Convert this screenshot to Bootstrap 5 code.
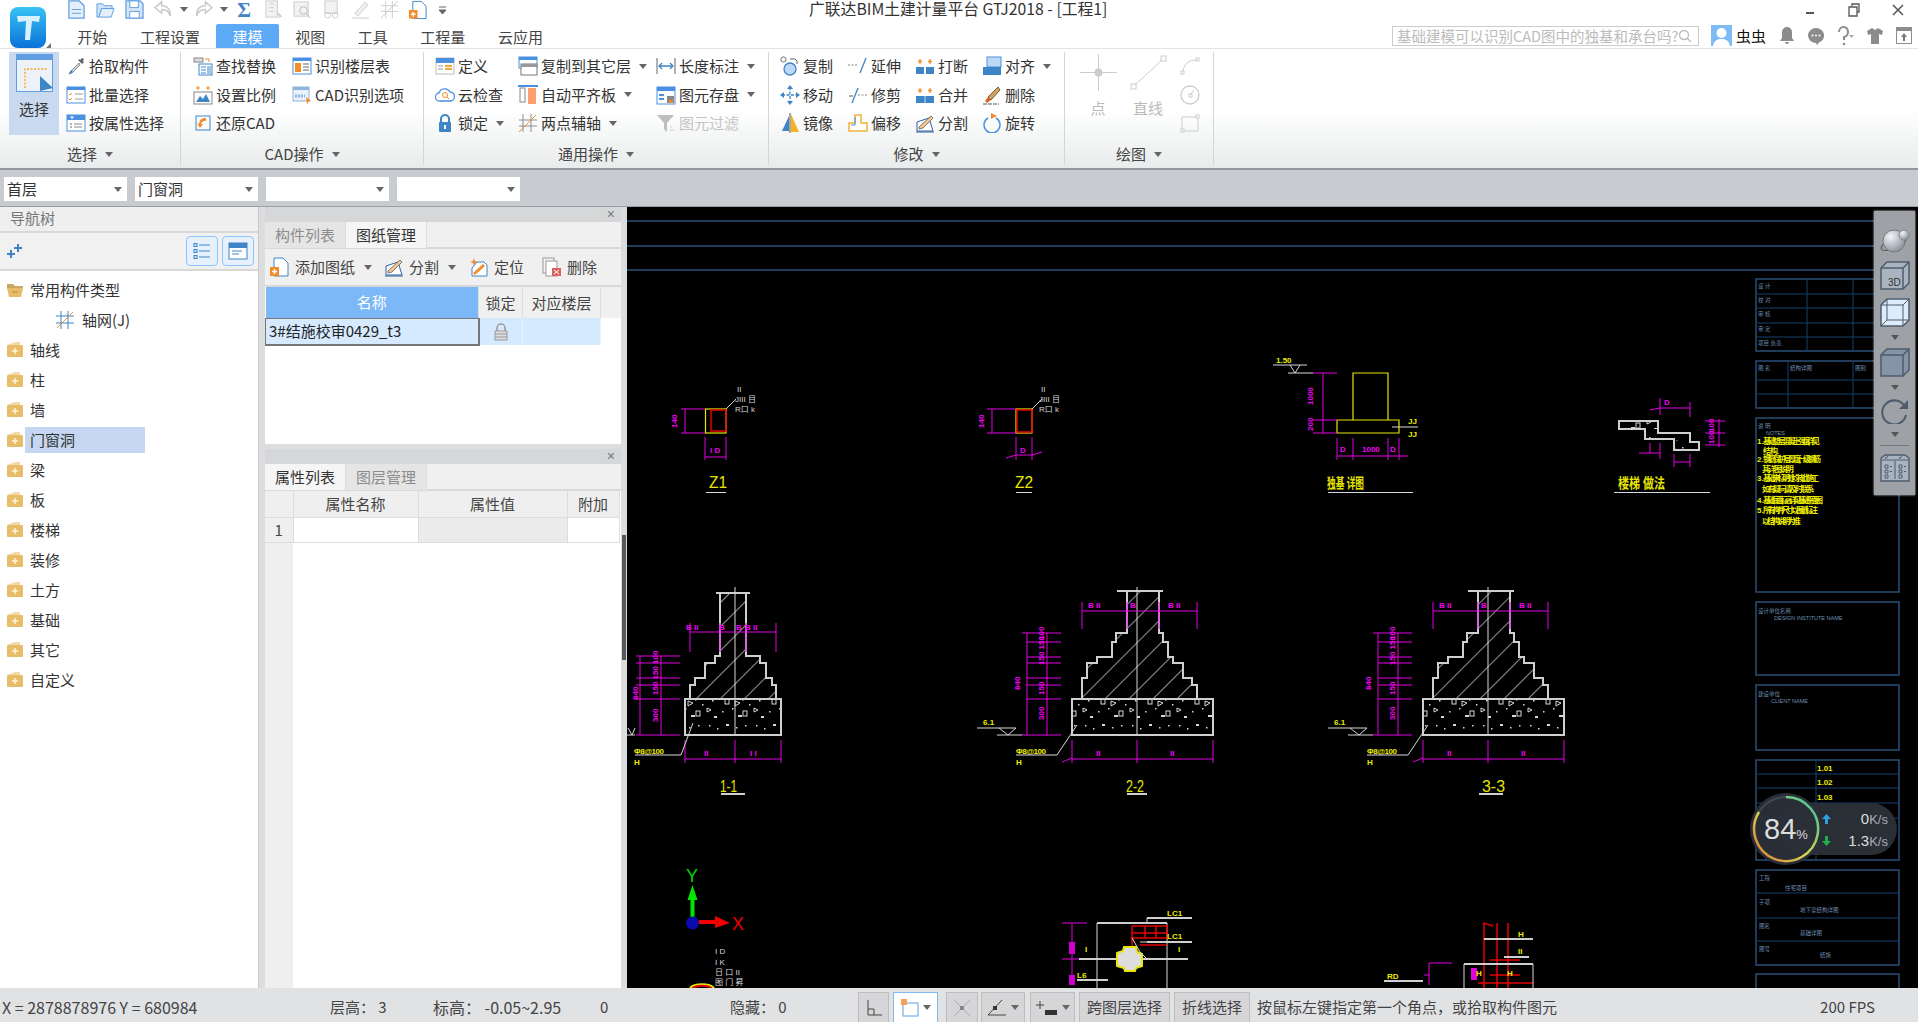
<!DOCTYPE html>
<html lang="zh-CN">
<head>
  <meta charset="UTF-8">
  <meta name="viewport" content="width=device-width, initial-scale=1.0">
  <title>广联达BIM土建计量平台 GTJ2018 - [工程1]</title>
  <link href="https://cdn.jsdelivr.net/npm/bootstrap@5.3.0/dist/css/bootstrap.min.css" rel="stylesheet">
  <style>
    html, body { height: 100%; }
    body {
      display: flex; flex-direction: column; overflow: hidden; background: #fff; color: #333;
      font: 15px/1.2 "Noto Sans CJK SC", "Liberation Sans", sans-serif;
    }
    svg { display: block; flex: none; }
    .off { position: absolute; width: 0; height: 0; }

    /* title bar and tabs */
    .tophead { height: 48px; flex: none; }
    .logocell { width: 61px; flex: none; padding: 7px 0 0 10px; display: flex; align-items: flex-end; align-self: flex-start; gap: 0; }
    .titlerow { height: 24px; padding-bottom: 5px; }
    .qat { width: 748px; padding-left: 6px; gap: 10px; }
    .qat .tri { margin: 0 -3.5px; }
    .qat .sigma { color: #3d85c6; font: bold 21px/20px "Liberation Serif", serif; width: 20px; text-align: center; }
    .apptitle { font-size: 15.8px; color: #333; }
    .winbtns { gap: 30px; padding-right: 13px; }
    .apptabs .nav-link { color: #444; padding: 3px 16.3px 0; height: 24px; font-size: 15px; line-height: 20px; border-radius: 2px 2px 0 0; }
    .apptabs .nav-link.active { color: #fff; background: #5ca9f5; }
    .searchbox { width: 307px; height: 20px; border: 1px solid #ccc; padding: 0 8px 0 4px; color: #bbb; font-size: 14.5px; line-height: 18px; white-space: nowrap; overflow: hidden; }
    .usertools { padding-right: 6px; gap: 12px; margin-top: -1px; }
    .username { color: #111; margin: 0 1px 0 -8px; }

    /* ribbon */
    .ribbon { height: 122px; flex: none; border-top: 1px solid #e4e4e4; border-bottom: 2px solid #94979b; background: linear-gradient(#fff 50%, #e9ecec); }
    .rgroup { display: flex; flex-direction: column; flex: none; height: 113px; border-right: 1px solid #d3d5d6; margin-top: 3px; }
    .rg1 { width: 181px; } .rg1 .rbody { padding-left: 9px; }
    .rg2 { width: 243px; } .rg2 .rbody { padding-left: 12px; }
    .rg3 { width: 345px; } .rg3 .rbody { padding-left: 11px; }
    .rg4 { width: 296px; } .rg4 .rbody { padding-left: 11px; }
    .rg5 { width: 149px; } .rg5 .rbody { padding-left: 8px; }
    .rbody { display: flex; height: 86px; flex: none; }
    .rfoot { height: 27px; flex: none; padding-top: 7px; display: flex; align-items: flex-start; justify-content: center; gap: 8px; color: #444; line-height: 18px; }
    .rfoot .tri { margin-top: 7px; }
    .bigbtn { width: 50px; height: 83px; flex: none; display: flex; flex-direction: column; align-items: center; gap: 8px; padding-top: 2px; }
    .bigbtn.on { background: #c9d9ef; margin-right: 7px; }
    .bigbtn.off-tool { color: #bbb; padding-top: 2px; }
    .rcol { display: flex; flex-direction: column; flex: none; }
    .rcol.drawside { margin-left: 7px; }
    .ritem { height: 28.5px; display: flex; align-items: center; gap: 3px; white-space: nowrap; }
    .ritem.dis { color: #c4c4c4; }
    .ritem .tri { margin-left: 5px; }
    .c99 { width: 99px; } .c83 { width: 83px; } .c138 { width: 138px; } .c68 { width: 68px; } .c67 { width: 67px; }
    .tri { width: 0; height: 0; flex: none; border: 4px solid transparent; border-top: 5px solid #666; border-bottom: 0; display: inline-block; }

    /* floor selects */
    .selbar { height: 37px; flex: none; background: #c8cbd0; padding: 7px 4px 6px; gap: 8px; border-bottom: 1px solid #9a9da1; }
    .selbar .form-select {
      width: 123px; height: 24px; padding: 0 14px 0 3px; border: 0; border-radius: 0; font-size: 15px; line-height: 24px; color: #333;
      background-size: 8px 5px; background-position: right 5px center;
      background-image: url("data:image/svg+xml,%3csvg xmlns='http://www.w3.org/2000/svg' viewBox='0 0 8 5'%3e%3cpath fill='%23666' d='M0 0h8L4 5z'/%3e%3c/svg%3e");
    }

    /* main row */
    .mainrow { flex: 1 1 0; min-height: 0; position: relative; background: #dcdddf; }
    .navpane { width: 259px; flex: none; background: #fff; border-right: 1px solid #c9c9c9; margin-right: 6px; }
    .navhead { height: 26px; background: #efefef; border-bottom: 2px solid #d8d8d8; color: #777; padding: 2px 10px; }
    .navbar-tools { height: 38px; background: #f1f1f1; border-bottom: 2px solid #d8d8d8; padding: 3px 4px 3px 7px; }
    .navtoolbtn { width: 32px; height: 30px; border: 1px solid #8cc4fb; border-radius: 4px; background: #e6f1fd; display: flex; align-items: center; justify-content: center; margin-left: 4px; }
    .navtree { padding-top: 4px; }
    .navtree .list-group-item { border: 0; padding: 0 0 0 6px; height: 30px; display: flex; align-items: center; gap: 1px; background: transparent; color: #333; font-size: 15px; }
    .navtree .list-group-item.sub { padding-left: 56px; gap: 3px; }
    .navtext { width: 120px; height: 26px; line-height: 26px; padding: 0 5px; white-space: nowrap; }
    .navtext.sel { background: #c5d7f0; }

    .midpane { width: 356px; flex: none; gap: 5px; }
    .gap-strip { width: 6px; flex: none; }
    .dockpanel { background: #fff; display: flex; flex-direction: column; }
    .dp-a { height: 237px; flex: none; }
    .dp-b { flex: 1 1 0; min-height: 0; }
    .dockhead { height: 15px; flex: none; background: #d6d7d9; color: #777; font: 14px/14px "Liberation Sans", sans-serif; text-align: right; padding-right: 6px; }
    .docktabs { height: 27px; flex: none; background: #f0f0f0; border-bottom: 2px solid #d9d9d9; }
    .docktabs .nav-link { width: 81px; height: 26px; padding: 0; line-height: 25px; text-align: center; border-radius: 0; color: #333; font-size: 15px; background: #f5f5f5; border-right: 1px solid #ddd; }
    .docktabs .nav-link.muted { color: #8c8c8c; background: #e5e5e5; }
    .docktools { height: 38px; flex: none; background: #f0f0f0; border-bottom: 2px solid #d9d9d9; padding-left: 5px; color: #444; }
    .dtool { display: flex; align-items: center; gap: 5px; white-space: nowrap; }
    .dt1 { width: 114px; } .dt2 { width: 85px; } .dt3 { width: 73px; }
    .dtool .tri { margin-left: 4px; }
    .dtable { table-layout: fixed; margin: 0; width: 100%; font-size: 15px; }
    .dtable th, .dtable td { padding: 0; text-align: center; vertical-align: middle; font-weight: 400; border: 0; color: #444; box-shadow: none; background: transparent; }
    .tbl-a th { height: 31px; background: #f0f0f0; border-right: 1px solid #ddd; }
    .tbl-a td { height: 27px; background: #d6eaff; border-right: 1px solid #e8f2fc; }
    .tbl-a th.hot { background: #7cb8f8; color: #fff; }
    .tbl-a th.rest { background: #f0f0f0; border: 0; }
    .tbl-a td.rest { background: #fff; border: 0; }
    .tbl-a td.cursel { text-align: left; padding-left: 3px; color: #222; border: 2px solid #777; border-width: 1px 2px 2px 1px; }
    .ca1 { width: 213px; } .ca2 { width: 44px; } .ca3 { width: 78px; } .cb1 { width: 28px; } .cb2 { width: 125px; } .cb3 { width: 149px; } .cb4 { width: 52px; }
    .lockcell { display: flex; justify-content: center; }
    .propbody { flex: 1 1 0; background: linear-gradient(to right, #efefef 28px, #fff 28px); }
    .tbl-b th { height: 26px; background: #efefef; border-right: 1px solid #ddd; border-bottom: 1px solid #ddd; }
    .tbl-b td { height: 25px; background: #fff; border-right: 1px solid #ddd; border-bottom: 1px solid #ddd; }
    .tbl-b td.idx { background: #efefef; }
    .tbl-b td.ro { background: #ebebeb; }
    .tbl-b .rest { background: #fff; border: 0; }
    .dragbar { position: absolute; left: 622px; top: 328px; width: 4px; height: 125px; background: #55585c; }

    /* cad canvas */
    .cadwrap { flex: 1 1 0; min-width: 0; position: relative; background: #000; overflow: hidden; }
    .cadsvg { width: 1291px; height: 781px; }
    .cadsvg text { font-family: "Liberation Sans", "Noto Sans CJK SC", sans-serif; }
    .m { stroke: #e600e6; fill: none; stroke-width: 1; }
    .w { stroke: #d8d8d8; fill: none; stroke-width: 1; }
    .w2 { stroke: #cfcfcf; fill: none; stroke-width: 2; }
    .y { stroke: #e6e600; fill: none; stroke-width: 1.2; }
    .r { stroke: #e60000; fill: none; stroke-width: 1.5; }
    .fr { stroke: #2a4f78; fill: none; stroke-width: 1.5; }
    .frn { stroke: #12416f; fill: none; stroke-width: 1; }
    .tm { fill: #f000f0; font-size: 8px; font-weight: 700; }
    .ty { fill: #ecec00; font-size: 8px; font-weight: 700; }
    .tyl { fill: #e6e600; font-size: 17px; }
    .tyw { fill: #e6e600; font-size: 14px; font-weight: 700; }
    .tw { fill: #d8d8d8; font-size: 8px; }
    .tb { fill: #6f8fb5; font-size: 5.5px; }

    .viewbar { position: absolute; right: 3px; top: 4px; width: 41px; height: 284px; background: #9ea1a5; box-shadow: 0 0 2px #ddd; padding-top: 17px; display: flex; flex-direction: column; align-items: center; gap: 8px; }
    .viewbar hr { width: 29px; margin: 0; border-top: 1px solid #777; opacity: 1; }
    .viewbar .tri { border-top-color: #555; }
    .speedbox { position: absolute; left: 1123px; top: 586px; width: 150px; height: 72px; }
    .speedpill { position: absolute; left: 30px; top: 10px; right: 3px; height: 52px; border-radius: 26px; background: rgba(46,50,58,.92); color: #aab; font: 13px/1 "Liberation Sans", sans-serif; }
    .speedrow { position: absolute; left: 42px; right: 9px; display: flex; align-items: center; justify-content: space-between; }
    .speedrow b { font-weight: 400; font-size: 15px; color: #ddd; }
    .speedrow span { text-align: right; }
    .sr1 { top: 8px; } .sr2 { top: 30px; }
    .speedring { position: absolute; left: 0; top: 0; }
    .speednum { position: absolute; left: 11px; top: 21px; width: 50px; text-align: center; color: #ddd; font: 29px/30px "Liberation Sans", sans-serif; white-space: nowrap; }
    .speednum small { font-size: 13px; }

    /* status bar */
    .statusbar { height: 34px; flex: none; background: #e1e2e4; color: #444; font-size: 15px; align-items: flex-end; }
    .statusbar .stxt { height: 34px; line-height: 38px; white-space: nowrap; flex: none; }
    .s1 { width: 330px; padding-left: 2px; font-size: 16px; } .s2 { width: 103px; } .s3 { width: 167px; font-size: 16px; } .s4 { width: 130px; } .s5 { width: 128px; }
    .stbtn { height: 30px; flex: none; padding: 0; border: 1px solid #bdbdbd; border-bottom: 0; border-radius: 0; background: #d6d6d8; color: #444; font-size: 15px; display: flex; align-items: center; justify-content: center; gap: 4px; }
    .stbtn.cur { background: #fff; border: 1px solid #7db9f6; border-bottom: 0; }
    .sb1 { width: 31px; margin-right: 4px; } .sb2 { width: 45px; margin-right: 8px; } .sb3 { width: 32px; margin-right: 3px; } .sb4 { width: 44px; margin-right: 5px; } .sb5 { width: 45px; margin-right: 4px; } .sb6 { width: 91px; margin-right: 4px; } .sb7 { width: 76px; margin-right: 7px; }
    .fps { margin-left: auto; padding-right: 43px; }
  </style>
</head>
<body>

<!-- icon sheet -->
<svg class="off" xmlns="http://www.w3.org/2000/svg">
  <defs>
    <symbol id="i-pick" viewBox="0 0 20 20"><path d="M13 7 5 15l-2 3 3-1 8-8z" fill="#cfd6de" stroke="#8a8f95"/><path d="M3 18l2-4 2 2z" fill="#3d85c6"/><path d="M12 4l4 4 2-2-1-1 1-2-2-1-2 2-1-1z" fill="#666"/></symbol>
    <symbol id="i-batch" viewBox="0 0 20 20"><rect x="1" y="2" width="18" height="16" fill="#fff" stroke="#4a90e2"/><rect x="1" y="2" width="18" height="3" fill="#4a90e2"/><path d="M3 9l1 1 2-2M3 14l1 1 2-2" stroke="#f28c28" fill="none"/><path d="M9 9h8M9 14h8" stroke="#999"/></symbol>
    <symbol id="i-attr" viewBox="0 0 20 20"><rect x="1" y="2" width="18" height="16" fill="#fff" stroke="#4a90e2"/><rect x="1" y="2" width="18" height="5" fill="#4a90e2"/><path d="M4 3.5h4L6 6z" fill="#fff"/><path d="M8 11h8M8 14h8" stroke="#888"/><path d="M4 11h2M4 14h2" stroke="#666"/></symbol>
    <symbol id="i-find" viewBox="0 0 20 20"><rect x="1" y="2" width="9" height="4" fill="#ddd" stroke="#888"/><path d="M12 3h4v3" stroke="#f28c28" fill="none"/><rect x="6" y="8" width="13" height="11" fill="#fff" stroke="#3d85c6"/><path d="M8 11h5M8 14h5M8 17h5M15 10v8M17 10v8" stroke="#3d85c6"/></symbol>
    <symbol id="i-scale" viewBox="0 0 20 20"><path d="M5 1v4M3 3h4M15 1v4M13 3h4" stroke="#f28c28"/><rect x="1" y="7" width="18" height="12" fill="#fff" stroke="#888"/><path d="M3 17l4-6 3 3 3-5 4 8z" fill="#3d85c6"/></symbol>
    <symbol id="i-restore" viewBox="0 0 20 20"><rect x="3" y="3" width="14" height="14" fill="none" stroke="#3d85c6"/><path d="M13 5a6 6 0 0 0-7 6l-2-1 3 5 3-4-2 0a4 4 0 0 1 5-3z" fill="#f28c28"/></symbol>
    <symbol id="i-floor" viewBox="0 0 20 20"><rect x="1" y="2" width="18" height="16" fill="#fff" stroke="#4a90e2"/><rect x="1" y="2" width="18" height="3" fill="#4a90e2"/><rect x="3" y="7" width="6" height="9" fill="#f28c28"/><path d="M11 8h6M11 11h6M11 14h6" stroke="#666"/></symbol>
    <symbol id="i-cadopt" viewBox="0 0 20 20"><rect x="1" y="2" width="16" height="14" fill="#eaf2fb" stroke="#8fb5dd"/><rect x="1" y="2" width="16" height="3" fill="#8fb5dd"/><path d="M14 12l5 4-3 1-1 3z" fill="#f28c28"/><path d="M3 11h10" stroke="#8fb5dd" stroke-width="3" stroke-dasharray="2 1"/></symbol>
    <symbol id="i-def" viewBox="0 0 20 20"><rect x="1" y="2" width="18" height="16" fill="#fff" stroke="#bbb"/><rect x="1" y="2" width="18" height="5" fill="#4a90e2"/><path d="M3 10h5M3 13h5" stroke="#999"/><path d="M10 10h7M10 13h7" stroke="#f2a93b" stroke-width="2"/></symbol>
    <symbol id="i-cloud" viewBox="0 0 20 20"><path d="M5 16a4 4 0 0 1-1-8 6 6 0 0 1 11-1 4.500 4.500 0 0 1 0 9z" fill="#fff" stroke="#4a90e2" stroke-width="1.300"/><circle cx="10" cy="10" r="2.500" fill="none" stroke="#f28c28"/><path d="M12 12l2 2" stroke="#f28c28"/></symbol>
    <symbol id="i-lock" viewBox="0 0 20 20"><path d="M6 9V6a4 4 0 0 1 8 0v3" fill="none" stroke="#3d85c6" stroke-width="2"/><rect x="4" y="9" width="12" height="10" rx="1" fill="#3d85c6"/><rect x="9" y="12" width="2" height="4" fill="#fff"/></symbol>
    <symbol id="i-copylayer" viewBox="0 0 20 20"><rect x="1" y="1" width="18" height="11" fill="#fff" stroke="#4a90e2"/><rect x="1" y="1" width="18" height="3" fill="#4a90e2"/><rect x="3" y="8" width="16" height="11" fill="#fff" stroke="#777"/><rect x="3" y="8" width="16" height="3" fill="#999"/></symbol>
    <symbol id="i-alignslab" viewBox="0 0 20 20"><path d="M0 1h20" stroke="#4a90e2" stroke-width="2"/><rect x="2" y="3" width="5" height="14" fill="#fff" stroke="#888"/><rect x="10" y="3" width="8" height="16" fill="#ff9e6d"/></symbol>
    <symbol id="i-twopt" viewBox="0 0 20 20"><path d="M5 1v18M13 1v18M1 7h18M1 13h18" stroke="#8a8f95"/><path d="M1 19 18 2" stroke="#f28c28"/></symbol>
    <symbol id="i-len" viewBox="0 0 20 20"><path d="M1 2v16M19 2v16" stroke="#666"/><path d="M3 10h14M6 7l-3 3 3 3M14 7l3 3-3 3" stroke="#3d85c6" fill="none" stroke-width="1.300"/></symbol>
    <symbol id="i-store" viewBox="0 0 20 20"><rect x="1" y="2" width="18" height="17" fill="#fff" stroke="#4a90e2"/><rect x="1" y="2" width="18" height="4" fill="#4a90e2"/><rect x="3" y="9" width="5" height="2" fill="#4a90e2"/><rect x="3" y="13" width="5" height="2" fill="#4a90e2"/><rect x="11" y="11" width="7" height="7" fill="#888"/><rect x="13" y="15" width="4" height="3" fill="#f28c28"/></symbol>
    <symbol id="i-filter" viewBox="0 0 20 20"><path d="M1 2h17l-7 8v9l-3-3v-6z" fill="#bfbfbf"/><path d="M14 17h4M14 14h2" stroke="#ccc"/></symbol>
    <symbol id="i-copy" viewBox="0 0 20 20"><rect x="1" y="1" width="5" height="5" rx="2" fill="#fff" stroke="#777"/><path d="M10 3h5l2 2v3" fill="none" stroke="#666"/><circle cx="10" cy="13" r="6" fill="#bcd8f4" stroke="#3d85c6" stroke-width="1.300"/></symbol>
    <symbol id="i-move" viewBox="0 0 20 20"><path d="M10 2v16M2 10h16" stroke="#3d85c6" stroke-width="1.300" stroke-dasharray="3 1.500"/><path d="M10 0l3 4H7zM10 20l-3-4h6zM0 10l4-3v6zM20 10l-4 3V7z" fill="#3d85c6"/></symbol>
    <symbol id="i-mirror" viewBox="0 0 20 20"><path d="M9 3v15H2z" fill="#3d85c6"/><path d="M11 1v18H19z" fill="#f5b324"/><path d="M10 0v20" stroke="#555"/></symbol>
    <symbol id="i-extend" viewBox="0 0 20 20"><path d="M0 9h10" stroke="#888" stroke-dasharray="2 1.500"/><path d="M12 17l6-15" stroke="#3d85c6" stroke-width="1.300"/></symbol>
    <symbol id="i-trim" viewBox="0 0 20 20"><path d="M1 11h4" stroke="#555"/><path d="M4 18 10 3" stroke="#3d85c6" stroke-width="1.300"/><path d="M10 10h10" stroke="#888" stroke-dasharray="2 1.500"/></symbol>
    <symbol id="i-offset" viewBox="0 0 20 20"><path d="M7 2h6v8h6v8H1v-8h6z" fill="#fff" stroke="#f2b23a" stroke-width="1.500"/><path d="M3 12h4V4" stroke="#4a90e2" fill="none"/></symbol>
    <symbol id="i-break" viewBox="0 0 20 20"><rect x="1" y="11" width="8" height="7" fill="#3d85c6"/><rect x="11" y="11" width="8" height="7" fill="#3d85c6"/><path d="M5 3v5M3 5.500h4M15 3v5M13 5.500h4" stroke="#f28c28" stroke-width="1.300"/></symbol>
    <symbol id="i-merge" viewBox="0 0 20 20"><rect x="1" y="11" width="18" height="7" fill="#3d85c6"/><path d="M10 11v7" stroke="#bcd8f4"/><path d="M5 3v5M3 5.500h4M15 3v5M13 5.500h4" stroke="#f28c28" stroke-width="1.300"/></symbol>
    <symbol id="i-split" viewBox="0 0 20 20"><path d="M2 18V9l12-4 4 13z" fill="#fff" stroke="#2f5f9e"/><path d="M4 14 16 3l2 2L8 15l-4 1z" fill="#f5c78a" stroke="#777"/><path d="M1 19h18" stroke="#2f5f9e"/></symbol>
    <symbol id="i-align" viewBox="0 0 20 20"><rect x="5" y="1" width="14" height="10" fill="#bcd8f4" stroke="#4a90e2"/><rect x="1" y="11" width="18" height="8" fill="#3d85c6"/></symbol>
    <symbol id="i-erase" viewBox="0 0 20 20"><path d="M16 2 6 12l3 3L18 5z" fill="#c9a36a" stroke="#7d5b2c"/><path d="M6 12l-3 4 2 2 4-3z" fill="#d9662b"/><path d="M1 19h16" stroke="#555" stroke-dasharray="4 1"/></symbol>
    <symbol id="i-rotate" viewBox="0 0 20 20"><path d="M6 5a8 8 0 1 0 8 0" fill="none" stroke="#4a90e2" stroke-width="1.500"/><path d="M9 0l6 3-6 3z" fill="#f28c28"/></symbol>
    <symbol id="i-sel" viewBox="0 0 37 38"><rect x=".5" y=".5" width="36" height="37" fill="#edf2f9" stroke="#5f9ee0"/><rect y="0" width="37" height="6" fill="#5f9ee0"/><path d="M9 34V15h22" fill="none" stroke="#f5a623" stroke-width="1.300" stroke-dasharray="2 1.500"/><path d="M24 22 37 34l-13 3z" fill="#3d85c6"/></symbol>
    <symbol id="i-point" viewBox="0 0 37 37"><path d="M18.500 0v37M0 18.500h37" stroke="#ccc"/><circle cx="18.500" cy="18.500" r="4" fill="#ccc"/></symbol>
    <symbol id="i-line" viewBox="0 0 37 37"><rect x="1" y="30" width="5" height="5" fill="none" stroke="#ccc"/><rect x="31" y="2" width="5" height="5" fill="none" stroke="#ccc"/><path d="M5 31 32 6" stroke="#ccc"/></symbol>
    <symbol id="i-darc" viewBox="0 0 20 20"><rect x="1" y="15" width="3" height="3" fill="none" stroke="#ccc"/><rect x="16" y="2" width="3" height="3" fill="none" stroke="#ccc"/><path d="M3 15C4 8 9 4 16 4" fill="none" stroke="#ccc"/></symbol>
    <symbol id="i-dcir" viewBox="0 0 20 20"><circle cx="10" cy="10" r="9" fill="none" stroke="#ccc" stroke-width="1.300"/><rect x="9" y="9" width="3" height="3" fill="none" stroke="#ccc"/><path d="M11 9l3-4" stroke="#ccc"/></symbol>
    <symbol id="i-drect" viewBox="0 0 20 20"><path d="M2 4h16v14H2z" fill="none" stroke="#ccc"/><rect x="1" y="16" width="3" height="3" fill="#fff" stroke="#ccc"/><rect x="16" y="2" width="3" height="3" fill="#fff" stroke="#ccc"/></symbol>
    <symbol id="q-new" viewBox="0 0 20 20"><path d="M2 1h11l5 5v13H2z" fill="#e3effb" stroke="#5f9ee0" stroke-width="1.300"/><path d="M5 10h10M5 14h10" stroke="#5f9ee0"/></symbol>
    <symbol id="q-open" viewBox="0 0 20 20"><path d="M1 4h6l2 2h8v3H6l-3 9H1z" fill="#cfe2f6" stroke="#5f9ee0"/><path d="M6 9h13l-3 9H3z" fill="#e3effb" stroke="#5f9ee0"/></symbol>
    <symbol id="q-save" viewBox="0 0 20 20"><path d="M1 1h15l3 3v15H1z" fill="#d5e6f8" stroke="#5f9ee0" stroke-width="1.300"/><rect x="5" y="1" width="9" height="7" fill="#fff" stroke="#5f9ee0"/><rect x="5" y="12" width="10" height="7" fill="#fff" stroke="#5f9ee0"/></symbol>
    <symbol id="q-undo" viewBox="0 0 20 20"><path d="M8 2 1 8l7 6v-4c5 0 8 2 9 7 1-7-3-11-9-11z" fill="none" stroke="#c9c9c9" stroke-width="1.500"/></symbol>
    <symbol id="q-redo" viewBox="0 0 20 20"><path d="M12 2l7 6-7 6v-4c-5 0-8 2-9 7-1-7 3-11 9-11z" fill="none" stroke="#c9c9c9" stroke-width="1.500"/></symbol>
    <symbol id="q-d1" viewBox="0 0 20 20"><rect x="2" y="1" width="12" height="17" fill="#f2f2f2" stroke="#ccc"/><path d="M6 4h4M6 8h4M6 12h4" stroke="#ccc"/><path d="M14 12l5 5-3 2z" fill="#ccc"/></symbol>
    <symbol id="q-d2" viewBox="0 0 20 20"><rect x="1" y="2" width="15" height="15" fill="#f2f2f2" stroke="#ccc"/><circle cx="11" cy="11" r="4" fill="none" stroke="#bbb"/><path d="M14 14l4 5" stroke="#bbb"/></symbol>
    <symbol id="q-d3" viewBox="0 0 20 20"><rect x="3" y="1" width="13" height="13" fill="#f2f2f2" stroke="#ccc"/><circle cx="6" cy="16" r="3" fill="none" stroke="#ccc"/><circle cx="14" cy="16" r="3" fill="none" stroke="#ccc"/></symbol>
    <symbol id="q-d4" viewBox="0 0 20 20"><path d="M4 14 15 2l3 3L7 17z" fill="#eee" stroke="#ccc"/><path d="M1 19h18" stroke="#ccc"/></symbol>
    <symbol id="q-d5" viewBox="0 0 20 20"><path d="M1 6h18M1 12h18M6 1v18M13 1v18M1 19 19 1" stroke="#ccc" fill="none"/></symbol>
    <symbol id="q-add" viewBox="0 0 20 20"><path d="M4 1h9l5 5v13H4z" fill="#fff" stroke="#3d85c6"/><rect x="0" y="10" width="9" height="9" fill="#f28c28"/><path d="M4.500 12v5M2 14.500h5" stroke="#fff" stroke-width="1.500"/></symbol>
    <symbol id="fold-p" viewBox="0 0 18 18"><path d="M1 4l8-3 5 0v3z" fill="#f3d9a4"/><rect x="1" y="4" width="16" height="12" rx="1" fill="#e8bd6a"/><path d="M9 7v6M6 10h6" stroke="#fff4d8" stroke-width="1.500"/></symbol>
    <symbol id="fold-m" viewBox="0 0 18 18"><path d="M1 3h6l2 2h8v3H1z" fill="#c9a765"/><path d="M1 7h16l-2 9H3z" fill="#e8bd6a"/><path d="M6 11h6" stroke="#c99a4a" stroke-width="1.500"/></symbol>
    <symbol id="i-axis" viewBox="0 0 18 18"><path d="M5 0v18M12 0v18M0 5h18M0 12h18" stroke="#3d85c6" fill="none"/><path d="M1 17 17 1" stroke="#f28c28"/></symbol>
    <symbol id="i-locate" viewBox="0 0 20 20"><path d="M5 1l1 3 3 1-3 1-1 3-1-3-3-1 3-1z" fill="#f28c28"/><path d="M8 5h7l3 3v11H3V11z" fill="#fff" stroke="#3d85c6"/><path d="M5 17 15 8" stroke="#f28c28" stroke-width="3"/></symbol>
    <symbol id="i-deld" viewBox="0 0 20 20"><rect x="1" y="1" width="11" height="15" fill="#f2f2f2" stroke="#999"/><rect x="4" y="4" width="11" height="15" fill="#fff" stroke="#999"/><rect x="10" y="11" width="9" height="8" fill="#e0605c"/><path d="M12 13l5 4M17 13l-5 4" stroke="#fff"/></symbol>
  </defs>
</svg>

<!-- title bar + app tabs -->
<header class="d-flex tophead">
  <div class="logocell">
    <svg width="36" height="41" viewBox="0 0 36 41"><defs><linearGradient id="lg" x1="0" y1="0" x2="0" y2="1"><stop offset="0" stop-color="#38c3f5"/><stop offset="1" stop-color="#0a72d8"/></linearGradient></defs><rect width="36" height="41" rx="8" fill="url(#lg)"/><path d="M7 9h23l-1 6-7-1-2 19h-5l1-19-8 1z" fill="#d8f2fd"/></svg>
    <svg width="5" height="5" viewBox="0 0 5 5"><path d="M5 0v5H0z" fill="#777"/></svg>
  </div>
  <div class="flex-grow-1 d-flex flex-column">
    <div class="titlerow d-flex align-items-center">
      <div class="qat d-flex align-items-center">
        <svg width="19" height="19"><use href="#q-new"/></svg>
        <svg width="19" height="19"><use href="#q-open"/></svg>
        <svg width="19" height="19"><use href="#q-save"/></svg>
        <svg width="19" height="19"><use href="#q-undo"/></svg><span class="tri"></span>
        <svg width="19" height="19"><use href="#q-redo"/></svg><span class="tri"></span>
        <span class="sigma">Σ</span>
        <svg width="19" height="19"><use href="#q-d1"/></svg>
        <svg width="19" height="19"><use href="#q-d2"/></svg>
        <svg width="19" height="19"><use href="#q-d3"/></svg>
        <svg width="19" height="19"><use href="#q-d4"/></svg>
        <svg width="19" height="19"><use href="#q-d5"/></svg>
        <svg width="19" height="20"><use href="#q-add"/></svg>
        <svg width="9" height="12" viewBox="0 0 9 12"><path d="M1 3h7M1 6h7L4.500 10z" stroke="#666" fill="#666"/></svg>
      </div>
      <div class="apptitle">广联达BIM土建计量平台 GTJ2018 - [工程1]</div>
      <div class="winbtns d-flex align-items-center ms-auto">
        <svg width="14" height="14" viewBox="0 0 14 14"><path d="M3 10h8" stroke="#555" stroke-width="2"/></svg>
        <svg width="14" height="14" viewBox="0 0 14 14"><path d="M5 3V1h7v8h-2M2 4h8v9H2z" stroke="#555" stroke-width="1.300" fill="none"/></svg>
        <svg width="14" height="14" viewBox="0 0 14 14"><path d="M2 2l10 10M12 2 2 12" stroke="#555" stroke-width="1.500"/></svg>
      </div>
    </div>
    <div class="d-flex flex-grow-1">
      <ul class="nav apptabs">
        <li class="nav-item"><a class="nav-link" href="#">开始</a></li>
        <li class="nav-item"><a class="nav-link" href="#">工程设置</a></li>
        <li class="nav-item"><a class="nav-link active" href="#">建模</a></li>
        <li class="nav-item"><a class="nav-link" href="#">视图</a></li>
        <li class="nav-item"><a class="nav-link" href="#">工具</a></li>
        <li class="nav-item"><a class="nav-link" href="#">工程量</a></li>
        <li class="nav-item"><a class="nav-link" href="#">云应用</a></li>
      </ul>
      <div class="d-flex align-items-center ms-auto usertools">
        <div class="searchbox d-flex align-items-center justify-content-between">
          <span>基础建模可以识别CAD图中的独基和承台吗?</span>
          <svg width="14" height="14" viewBox="0 0 14 14"><circle cx="6" cy="6" r="4.500" fill="none" stroke="#bbb" stroke-width="1.300"/><path d="M9 9l4 4" stroke="#bbb" stroke-width="1.300"/></svg>
        </div>
        <svg width="21" height="21" viewBox="0 0 21 21"><rect width="21" height="21" fill="#7dbbf5"/><circle cx="10.500" cy="8" r="5" fill="#fff"/><path d="M2 21c1-6 5-7 8.500-7s7.500 1 8.500 7z" fill="#fff"/></svg>
        <span class="username">虫虫</span>
        <svg width="16" height="19" viewBox="0 0 16 19"><path d="M8 1a5 5 0 0 0-5 5v6l-2 3h14l-2-3V6a5 5 0 0 0-5-5zM6 16h4a2 2 0 0 1-4 0z" fill="#8c8c8c"/></svg>
        <svg width="18" height="18" viewBox="0 0 18 18"><path d="M9 1a8 7.500 0 1 0 0 15l1 2 2-2.500A8 7.500 0 0 0 9 1z" fill="#8c8c8c"/><circle cx="5.500" cy="8.500" r="1" fill="#fff"/><circle cx="9" cy="8.500" r="1" fill="#fff"/><circle cx="12.500" cy="8.500" r="1" fill="#fff"/></svg>
        <svg width="17" height="20" viewBox="0 0 17 20"><path d="M2 6a4.500 5 0 1 1 5 5v3" fill="none" stroke="#8c8c8c" stroke-width="2"/><circle cx="7" cy="18" r="1.300" fill="#8c8c8c"/><path d="M12 9h5l-2.500 3z" fill="#aaa"/></svg>
        <svg width="18" height="18" viewBox="0 0 18 18"><path d="M6 1 1 4l1 4 3-1v10h8V7l3 1 1-4-5-3-3 2z" fill="#8c8c8c"/></svg>
        <svg width="16" height="17" viewBox="0 0 16 17"><rect x=".5" y=".5" width="15" height="16" fill="#fff" stroke="#8c8c8c"/><rect width="16" height="4" fill="#8c8c8c"/><path d="M8 6l3 4H9v4H7v-4H5z" fill="#777"/></svg>
      </div>
    </div>
  </div>
</header>

<!-- ribbon -->
<section class="ribbon d-flex">
  <div class="rgroup rg1">
    <div class="rbody">
      <div class="bigbtn on"><svg width="37" height="38"><use href="#i-sel"/></svg><span>选择</span></div>
      <div class="rcol">
        <div class="ritem"><svg width="20" height="20"><use href="#i-pick"/></svg>拾取构件</div>
        <div class="ritem"><svg width="20" height="20"><use href="#i-batch"/></svg>批量选择</div>
        <div class="ritem"><svg width="20" height="20"><use href="#i-attr"/></svg>按属性选择</div>
      </div>
    </div>
    <div class="rfoot">选择 <span class="tri"></span></div>
  </div>
  <div class="rgroup rg2">
    <div class="rbody">
      <div class="rcol c99">
        <div class="ritem"><svg width="20" height="20"><use href="#i-find"/></svg>查找替换</div>
        <div class="ritem"><svg width="20" height="20"><use href="#i-scale"/></svg>设置比例</div>
        <div class="ritem"><svg width="20" height="20"><use href="#i-restore"/></svg>还原CAD</div>
      </div>
      <div class="rcol">
        <div class="ritem"><svg width="20" height="20"><use href="#i-floor"/></svg>识别楼层表</div>
        <div class="ritem"><svg width="20" height="20"><use href="#i-cadopt"/></svg>CAD识别选项</div>
      </div>
    </div>
    <div class="rfoot">CAD操作 <span class="tri"></span></div>
  </div>
  <div class="rgroup rg3">
    <div class="rbody">
      <div class="rcol c83">
        <div class="ritem"><svg width="20" height="20"><use href="#i-def"/></svg>定义</div>
        <div class="ritem"><svg width="20" height="20"><use href="#i-cloud"/></svg>云检查</div>
        <div class="ritem"><svg width="20" height="20"><use href="#i-lock"/></svg>锁定<span class="tri"></span></div>
      </div>
      <div class="rcol c138">
        <div class="ritem"><svg width="20" height="20"><use href="#i-copylayer"/></svg>复制到其它层<span class="tri"></span></div>
        <div class="ritem"><svg width="20" height="20"><use href="#i-alignslab"/></svg>自动平齐板<span class="tri"></span></div>
        <div class="ritem"><svg width="20" height="20"><use href="#i-twopt"/></svg>两点辅轴<span class="tri"></span></div>
      </div>
      <div class="rcol">
        <div class="ritem"><svg width="20" height="20"><use href="#i-len"/></svg>长度标注<span class="tri"></span></div>
        <div class="ritem"><svg width="20" height="20"><use href="#i-store"/></svg>图元存盘<span class="tri"></span></div>
        <div class="ritem dis"><svg width="20" height="20"><use href="#i-filter"/></svg>图元过滤</div>
      </div>
    </div>
    <div class="rfoot">通用操作 <span class="tri"></span></div>
  </div>
  <div class="rgroup rg4">
    <div class="rbody">
      <div class="rcol c68">
        <div class="ritem"><svg width="20" height="20"><use href="#i-copy"/></svg>复制</div>
        <div class="ritem"><svg width="20" height="20"><use href="#i-move"/></svg>移动</div>
        <div class="ritem"><svg width="20" height="20"><use href="#i-mirror"/></svg>镜像</div>
      </div>
      <div class="rcol c67">
        <div class="ritem"><svg width="20" height="20"><use href="#i-extend"/></svg>延伸</div>
        <div class="ritem"><svg width="20" height="20"><use href="#i-trim"/></svg>修剪</div>
        <div class="ritem"><svg width="20" height="20"><use href="#i-offset"/></svg>偏移</div>
      </div>
      <div class="rcol c67">
        <div class="ritem"><svg width="20" height="20"><use href="#i-break"/></svg>打断</div>
        <div class="ritem"><svg width="20" height="20"><use href="#i-merge"/></svg>合并</div>
        <div class="ritem"><svg width="20" height="20"><use href="#i-split"/></svg>分割</div>
      </div>
      <div class="rcol">
        <div class="ritem"><svg width="20" height="20"><use href="#i-align"/></svg>对齐<span class="tri"></span></div>
        <div class="ritem"><svg width="20" height="20"><use href="#i-erase"/></svg>删除</div>
        <div class="ritem"><svg width="20" height="20"><use href="#i-rotate"/></svg>旋转</div>
      </div>
    </div>
    <div class="rfoot">修改 <span class="tri"></span></div>
  </div>
  <div class="rgroup rg5">
    <div class="rbody">
      <div class="bigbtn off-tool"><svg width="37" height="37"><use href="#i-point"/></svg><span>点</span></div>
      <div class="bigbtn off-tool"><svg width="37" height="37"><use href="#i-line"/></svg><span>直线</span></div>
      <div class="rcol drawside">
        <div class="ritem"><svg width="20" height="20"><use href="#i-darc"/></svg></div>
        <div class="ritem"><svg width="20" height="20"><use href="#i-dcir"/></svg></div>
        <div class="ritem"><svg width="20" height="20"><use href="#i-drect"/></svg></div>
      </div>
    </div>
    <div class="rfoot">绘图 <span class="tri"></span></div>
  </div>
</section>

<!-- floor / type selects -->
<div class="selbar d-flex">
  <select class="form-select"><option>首层</option></select>
  <select class="form-select"><option>门窗洞</option></select>
  <select class="form-select"><option></option></select>
  <select class="form-select"><option></option></select>
</div>

<main class="mainrow d-flex">
  <!-- nav tree -->
  <aside class="navpane d-flex flex-column">
    <div class="navhead">导航树</div>
    <div class="navbar-tools d-flex align-items-center">
      <svg width="16" height="16" viewBox="0 0 16 16"><path d="M11 1v8M7 5h8M4 7v8M0 11h8" stroke="#3d85c6" stroke-width="2"/></svg>
      <div class="navtoolbtn ms-auto"><svg width="18" height="18" viewBox="0 0 18 18"><path d="M6 3h11M6 9h11M6 15h11" stroke="#3d85c6"/><rect x="1" y="1.500" width="3" height="3" fill="#cfe2f6" stroke="#3d85c6"/><rect x="1" y="7.500" width="3" height="3" fill="#cfe2f6" stroke="#3d85c6"/><rect x="1" y="13.500" width="3" height="3" fill="#cfe2f6" stroke="#3d85c6"/></svg></div>
      <div class="navtoolbtn"><svg width="20" height="20" viewBox="0 0 20 20"><rect x="1" y="2" width="18" height="16" fill="#fff" stroke="#3d85c6"/><rect x="1" y="2" width="18" height="5" fill="#3d85c6"/><path d="M4 10h10M4 13h7" stroke="#3d85c6"/></svg></div>
    </div>
    <ul class="list-group list-group-flush navtree">
      <li class="list-group-item"><svg width="18" height="18"><use href="#fold-m"/></svg><span class="navtext">常用构件类型</span></li>
      <li class="list-group-item sub"><svg width="18" height="18"><use href="#i-axis"/></svg><span class="navtext">轴网(J)</span></li>
      <li class="list-group-item"><svg width="18" height="18"><use href="#fold-p"/></svg><span class="navtext">轴线</span></li>
      <li class="list-group-item"><svg width="18" height="18"><use href="#fold-p"/></svg><span class="navtext">柱</span></li>
      <li class="list-group-item"><svg width="18" height="18"><use href="#fold-p"/></svg><span class="navtext">墙</span></li>
      <li class="list-group-item"><svg width="18" height="18"><use href="#fold-p"/></svg><span class="navtext sel">门窗洞</span></li>
      <li class="list-group-item"><svg width="18" height="18"><use href="#fold-p"/></svg><span class="navtext">梁</span></li>
      <li class="list-group-item"><svg width="18" height="18"><use href="#fold-p"/></svg><span class="navtext">板</span></li>
      <li class="list-group-item"><svg width="18" height="18"><use href="#fold-p"/></svg><span class="navtext">楼梯</span></li>
      <li class="list-group-item"><svg width="18" height="18"><use href="#fold-p"/></svg><span class="navtext">装修</span></li>
      <li class="list-group-item"><svg width="18" height="18"><use href="#fold-p"/></svg><span class="navtext">土方</span></li>
      <li class="list-group-item"><svg width="18" height="18"><use href="#fold-p"/></svg><span class="navtext">基础</span></li>
      <li class="list-group-item"><svg width="18" height="18"><use href="#fold-p"/></svg><span class="navtext">其它</span></li>
      <li class="list-group-item"><svg width="18" height="18"><use href="#fold-p"/></svg><span class="navtext">自定义</span></li>
    </ul>
  </aside>

  <!-- drawing / property docks -->
  <div class="midpane d-flex flex-column">
    <div class="dockpanel dp-a">
      <div class="dockhead">×</div>
      <ul class="nav docktabs">
        <li class="nav-item"><a class="nav-link muted" href="#">构件列表</a></li>
        <li class="nav-item"><a class="nav-link" href="#">图纸管理</a></li>
      </ul>
      <div class="docktools d-flex align-items-center">
        <div class="dtool dt1"><svg width="20" height="20"><use href="#q-add"/></svg>添加图纸<span class="tri"></span></div>
        <div class="dtool dt2"><svg width="20" height="20"><use href="#i-split"/></svg>分割<span class="tri"></span></div>
        <div class="dtool dt3"><svg width="20" height="20"><use href="#i-locate"/></svg>定位</div>
        <div class="dtool"><svg width="20" height="20"><use href="#i-deld"/></svg>删除</div>
      </div>
      <table class="table dtable tbl-a">
        <colgroup><col class="ca1"><col class="ca2"><col class="ca3"><col></colgroup>
        <thead><tr><th class="hot">名称</th><th>锁定</th><th>对应楼层</th><th class="rest"></th></tr></thead>
        <tbody><tr>
          <td class="cursel">3#结施校审0429_t3</td>
          <td><div class="lockcell"><svg width="14" height="18" viewBox="0 0 14 18"><path d="M3 8V5a4 4 0 0 1 8 0v3" fill="none" stroke="#999" stroke-width="1.500"/><rect x="1" y="8" width="12" height="9" fill="#ddd" stroke="#999"/><path d="M1 11h12M1 14h12" stroke="#999"/></svg></div></td>
          <td></td><td class="rest"></td>
        </tr></tbody>
      </table>
    </div>
    <div class="dockpanel dp-b">
      <div class="dockhead">×</div>
      <ul class="nav docktabs">
        <li class="nav-item"><a class="nav-link" href="#">属性列表</a></li>
        <li class="nav-item"><a class="nav-link muted" href="#">图层管理</a></li>
      </ul>
      <div class="propbody">
        <table class="table dtable tbl-b">
          <colgroup><col class="cb1"><col class="cb2"><col class="cb3"><col class="cb4"><col></colgroup>
          <thead><tr><th></th><th>属性名称</th><th>属性值</th><th>附加</th><th class="rest"></th></tr></thead>
          <tbody><tr><td class="idx">1</td><td></td><td class="ro"></td><td></td><td class="rest"></td></tr></tbody>
        </table>
      </div>
    </div>
  </div>
  <div class="gap-strip"></div>
  <div class="dragbar"></div>

  <!-- CAD canvas: coordinates are page pixels -->
  <div class="cadwrap">
    <svg class="cadsvg" viewBox="627 207 1291 781" xmlns="http://www.w3.org/2000/svg">
      <defs>
        <pattern id="hatch" patternUnits="userSpaceOnUse" width="17" height="17" patternTransform="rotate(45)"><path d="M0 0V17" stroke="#cfcfcf" stroke-width="1.400"/></pattern>
        <pattern id="conc" patternUnits="userSpaceOnUse" width="47" height="36">
          <g fill="#d8d8d8"><rect x="4" y="5" width="1.500" height="1.500"/><rect x="12" y="8" width="1.500" height="1.500"/><rect x="21" y="4" width="3" height="2"/><rect x="31" y="7" width="1.500" height="1.500"/><rect x="40" y="5" width="1.500" height="1.500"/><rect x="7" y="16" width="1.500" height="1.500"/><rect x="37" y="15" width="1.500" height="1.500"/><rect x="44" y="20" width="1.500" height="1.500"/><rect x="17" y="27" width="1.500" height="1.500"/><rect x="27" y="24" width="1.500" height="1.500"/><rect x="9" y="32" width="3" height="2"/><rect x="33" y="31" width="4" height="2"/></g>
          <g fill="none" stroke="#d8d8d8"><rect x="20" y="15" width="4" height="5"/><path d="M30 17l5 2-5 3zM2 24l4 2-4 2z"/><rect x="38" y="27" width="4" height="5"/></g>
        </pattern>
        <clipPath id="clip22"><polygon points="1127,591 1127,633 1116,633 1116,642 1112,642 1112,657 1097,657 1097,663 1087,663 1087,678 1082,678 1082,699 1197,699 1197,685 1192,685 1192,678 1183,678 1183,663 1173,663 1173,657 1168,657 1168,642 1163,642 1163,633 1159,633 1159,591"/></clipPath>
        <clipPath id="clip11"><polygon points="720,593 720,656 715,656 715,663 705,663 705,678 695,678 695,685 690,685 690,699 776,699 776,685 772,685 772,678 766,678 766,663 760,663 760,656 746,656 746,593"/></clipPath>

        <g id="secwide">
          <rect x="1082" y="591" width="115" height="108" fill="url(#hatch)" clip-path="url(#clip22)"/>
          <path class="w2" d="M1117 591h46M1127 591v42h-11v9h-4v15h-15v6h-10v15h-5v21M1159 591v42h4v9h5v15h5v6h10v15h9v7h5v14"/>
          <path class="w" d="M1137 587v148"/>
          <rect x="1072" y="699" width="141" height="36" fill="url(#conc)"/>
          <rect class="w2" x="1072" y="699" width="141" height="36"/>
          <path class="m" d="M1082 611h115M1082 602v27M1197 602v27M1127 602v27M1159 602v27"/>
          <text class="tm" x="1088" y="608">B II</text><text class="tm" x="1130" y="608">B</text><text class="tm" x="1168" y="608">B II</text>
          <path class="m" d="M1022 633h39M1027 642h34M1027 657h34M1027 663h34M1027 678h34M1027 685h34M1027 699h34M1022 735h39M1027 633v102M1047 633v102"/>
          <text class="tm" transform="rotate(-90 1020 690)" x="1020" y="690">840</text>
          <text class="tm" transform="rotate(-90 1044 720)" x="1044" y="720">300</text>
          <text class="tm" transform="rotate(-90 1044 695)" x="1044" y="695">150</text>
          <text class="tm" transform="rotate(-90 1044 665)" x="1044" y="665">150 150</text>
          <text class="tm" transform="rotate(-90 1044 640)" x="1044" y="640">100</text>
          <path class="w" d="M977 728h39M999 728l9 7 8-7M997 735h25"/>
          <text class="ty" x="983" y="725">6.1</text>
          <path class="m" d="M1072 759h141M1072 740v23M1137 740v23M1213 740v23M1062 762l10-4"/>
          <text class="tm" x="1096" y="756">II</text><text class="tm" x="1170" y="756">II</text>
          <text class="ty" x="1016" y="754" textLength="30">Φ8@100</text><text class="ty" x="1016" y="765">H</text>
          <path class="w" d="M1016 755h41l20-30"/>
        </g>
      </defs>

      <!-- top frame lines -->
      <path class="fr" d="M627 221H1874M627 246H1874M627 270H1874"/>

      <!-- Z1, Z2 -->
      <rect class="y" x="705.500" y="409" width="20.500" height="24"/>
      <path class="r" d="M711 410h15v21h-15z"/>
      <path class="m" d="M681 409h24M681 433h24M685 409v24M705 437v23M726 437v23M705 457h21"/>
      <text class="tm" transform="rotate(-90 677 428)" x="677" y="428">140</text>
      <text class="tm" x="710" y="453">I D</text>
      <path class="w" d="M726 409l10-10"/>
      <text class="tw" x="737" y="392">II</text><text class="tw" x="735" y="402">JIII 目</text><text class="tw" x="735" y="412">R口 k</text>
      <text class="tyl" x="709" y="488" textLength="18" lengthAdjust="spacingAndGlyphs">Z1</text><path class="w" d="M706 492.500h20"/>

      <rect class="y" x="1016" y="409" width="16" height="24"/>
      <path class="r" d="M1017 410h15v22h-15z"/>
      <path class="m" d="M987 409h29M987 433h29M992 409v24M1016 437v23M1032 437v23M1006 458l10-3h16l10-3"/>
      <text class="tm" transform="rotate(-90 984 428)" x="984" y="428">140</text>
      <text class="tm" x="1020" y="453">D</text>
      <path class="w" d="M1032 409l10-10"/>
      <text class="tw" x="1041" y="392">II</text><text class="tw" x="1039" y="402">JIII 目</text><text class="tw" x="1039" y="412">R口 k</text>
      <text class="tyl" x="1015" y="488" textLength="18" lengthAdjust="spacingAndGlyphs">Z2</text><path class="w" d="M1016 492.500h16"/>

      <!-- JL detail -->
      <path class="y" d="M1353 420v-47h35v47M1337 420h62v13h-62z"/>
      <path class="m" d="M1313 373h24M1313 420h24M1313 433h24M1323 373v60M1337 438v22M1353 438v22M1388 438v22M1399 438v22M1337 456h71"/>
      <text class="tm" transform="rotate(-90 1313 405)" x="1313" y="405">1000</text>
      <text class="tm" transform="rotate(-90 1313 431)" x="1313" y="431">200</text>
      <text class="tm" x="1340" y="452">D</text><text class="tm" x="1362" y="452">1000</text><text class="tm" x="1390" y="452">D</text>
      <path class="w" d="M1273 365h34M1290 365l5 8 5-8M1288 373h25M1392 427h26"/>
      <text class="ty" x="1276" y="363">1.50</text>
      <text class="ty" x="1408" y="424">JJ</text><text class="ty" x="1408" y="437">JJ</text>
      <text class="tyw" x="1327" y="488" textLength="37" lengthAdjust="spacingAndGlyphs">独基 详图</text><path class="w" d="M1328 492.500h85"/>

      <!-- stair detail -->
      <polygon class="w2" points="1619,421 1658,421 1658,433 1690,433 1690,442 1699,442 1699,450 1674,450 1674,439 1645,439 1645,429 1619,429"/>
      <rect x="1620" y="422" width="38" height="7" fill="url(#conc)"/><rect x="1646" y="430" width="12" height="9" fill="url(#conc)"/><rect x="1675" y="440" width="15" height="9" fill="url(#conc)"/>
      <path class="m" d="M1650 410l10-2h30M1660 398v17M1690 402v15M1705 421h20M1705 433h20M1705 445h20M1719 419v28M1639 453h21M1650 443v10M1660 443v16M1674 462h16M1674 454v13M1690 454v13"/>
      <text class="tm" x="1664" y="405">D</text>
      <text class="tm" transform="rotate(-90 1714 432)" x="1714" y="432">100</text>
      <text class="tm" transform="rotate(-90 1714 444)" x="1714" y="444">100</text>
      <text class="tyw" x="1618" y="488" textLength="47" lengthAdjust="spacingAndGlyphs">楼梯 做法</text><path class="w" d="M1614 492.500h96"/>

      <!-- 1-1 -->
      <rect x="685" y="591" width="96" height="108" fill="url(#hatch)" clip-path="url(#clip11)"/>
      <path class="w2" d="M716 593h34M720 593v63h-5v7h-10v15h-10v7h-5v14M746 593v63h14v7h6v15h6v7h4v14"/>
      <path class="w" d="M735 587v148"/>
      <rect x="685" y="699" width="96" height="36" fill="url(#conc)"/>
      <rect class="w2" x="685" y="699" width="96" height="36"/>
      <path class="m" d="M690 632h86M690 623v29M776 623v29M720 623v29M746 623v29"/>
      <text class="tm" x="686" y="630">B II</text><text class="tm" x="719" y="630">B</text><text class="tm" x="736" y="630">B</text><text class="tm" x="745" y="630">B II</text>
      <path class="m" d="M636 656h44M636 663h44M636 678h44M636 685h44M636 699h44M636 735h44M640 656v79M661 656v79"/>
      <text class="tm" transform="rotate(-90 638 700)" x="638" y="700">840</text>
      <text class="tm" transform="rotate(-90 658 722)" x="658" y="722">300</text>
      <text class="tm" transform="rotate(-90 658 695)" x="658" y="695">150 150</text>
      <text class="tm" transform="rotate(-90 658 664)" x="658" y="664">100</text>
      <path class="w" d="M627 735h8M628 728l4 7 3-7"/>
      <path class="m" d="M685 759h96M685 740v23M735 740v23M781 740v23"/>
      <text class="tm" x="704" y="756">II</text><text class="tm" x="750" y="756">I I</text>
      <text class="ty" x="634" y="754" textLength="30">Φ8@100</text><text class="ty" x="634" y="765">H</text>
      <path class="w" d="M635 755h46l12-32"/>
      <text class="tyl" x="720" y="792" textLength="17" lengthAdjust="spacingAndGlyphs">1-1</text><path class="w2" d="M721 794h24"/>

      <!-- 2-2, 3-3 -->
      <use href="#secwide"/>
      <text class="tyl" x="1126" y="792" textLength="18" lengthAdjust="spacingAndGlyphs">2-2</text><path class="w2" d="M1127 794h20"/>
      <use href="#secwide" transform="translate(351 0)"/>
      <text class="tyl" x="1482" y="792" textLength="23" lengthAdjust="spacingAndGlyphs">3-3</text><path class="w2" d="M1479 794h24"/>

      <!-- right hand table frames -->
      <g>
        <rect class="fr" x="1756" y="279" width="143" height="72"/>
        <path class="frn" d="M1756 294h143M1756 308h143M1756 323h143M1756 337h143M1807 279v72M1853 279v72"/>
        <text class="tb" x="1758" y="288">设 计</text><text class="tb" x="1758" y="302">校 对</text><text class="tb" x="1758" y="316">审 核</text><text class="tb" x="1758" y="331">审 定</text><text class="tb" x="1758" y="345">项目 负责</text>
        <rect class="fr" x="1756" y="361" width="143" height="47"/>
        <path class="frn" d="M1756 380h143M1756 394h143M1788 361v47M1853 361v47"/>
        <text class="tb" x="1758" y="370">图 名</text><text class="tb" x="1790" y="370">结构详图</text><text class="tb" x="1855" y="370">图别</text>
        <rect class="fr" x="1756" y="418" width="143" height="174"/>
        <text class="tb" x="1758" y="428">说 明</text><text class="tb" x="1766" y="435">NOTES</text>
        <g class="ty">
          <text x="1757" y="444">1.</text><text x="1763" y="444" textLength="57">基础垫层混凝土强度,详见</text>
          <text x="1763" y="454" textLength="16">结构.</text>
          <text x="1757" y="462">2.</text><text x="1763" y="462" textLength="58">钢筋保护层厚度,一级钢筋</text>
          <text x="1762" y="472" textLength="32">其,详图说明.</text>
          <text x="1757" y="481">3.</text><text x="1763" y="481" textLength="56">基础未标明处均按此施工</text>
          <text x="1762" y="492" textLength="52">如有疑问,请及时联系.</text>
          <text x="1757" y="503">4.</text><text x="1763" y="503" textLength="60">基础底面标高详见基础平面图</text>
          <text x="1757" y="513">5.</text><text x="1763" y="513" textLength="55">所有构件尺寸以图纸标注</text>
          <text x="1762" y="524" textLength="38">以结构说明为准.</text>
        </g>
        <rect class="fr" x="1756" y="602" width="143" height="73"/>
        <text class="tb" x="1758" y="613">设计单位名称</text><text class="tb" x="1774" y="620">DESIGN INSTITUTE NAME</text>
        <rect class="fr" x="1756" y="685" width="143" height="65"/>
        <text class="tb" x="1758" y="696">建设单位</text><text class="tb" x="1771" y="703">CLIENT NAME</text>
        <rect class="fr" x="1756" y="760" width="143" height="100"/>
        <path class="frn" d="M1756 774h143M1756 788h143M1756 803h143M1756 818h143M1816 760v100"/>
        <text class="ty" x="1817" y="771">1.01</text><text class="ty" x="1817" y="785">1.02</text><text class="ty" x="1817" y="800">1.03</text>
        <rect class="fr" x="1756" y="870" width="143" height="95"/>
        <path class="frn" d="M1756 893h143M1756 918h143M1756 941h143"/>
        <text class="tb" x="1759" y="880">工程</text><text class="tb" x="1785" y="890">住宅项目</text>
        <text class="tb" x="1759" y="904">子项</text><text class="tb" x="1800" y="912">地下室结构详图</text>
        <text class="tb" x="1759" y="928">图名</text><text class="tb" x="1800" y="935">基础详图</text>
        <text class="tb" x="1759" y="951">图号</text><text class="tb" x="1820" y="957">结施</text>
        <path class="fr" d="M1756 988v-14h143v14"/>
      </g>

      <!-- lower drawings -->
      <path class="m" d="M1072 923v62M1062 923h25M1062 959h20"/>
      <rect x="1069" y="942" width="6" height="12" fill="#d000d0"/><rect x="1069" y="975" width="6" height="10" fill="#d000d0"/>
      <path class="w" d="M1097 988v-65h70v65M1147 923v-5"/>
      <path class="w2" d="M1097 923h70M1147 918h45M1147 942h45M1079 959h38M1142 959h46M1077 980h31"/>
      <path class="r" d="M1132 926h35v12h-35M1132 926v30M1145 926v12M1156 926v12M1132 933h35M1140 945h27"/>
      <polygon points="1124,947 1136,947 1137,952 1142,954 1142,966 1136,968 1135,971 1125,971 1124,968 1117,966 1117,953 1123,951" fill="#ddd" stroke="#e6e600" stroke-width="2"/>
      <path class="w" d="M1132 938l8 14 8 8M1140 942h8"/>
      <text class="ty" x="1167" y="916">LC1</text><text class="ty" x="1167" y="939">LC1</text><text class="ty" x="1077" y="978">L6</text>
      <text class="ty" x="1085" y="952">I</text><text class="ty" x="1178" y="952">I</text>

      <path class="r" d="M1484 988v-65l9 3M1497 923v65M1508 923v65M1478 983h55M1490 960h30M1490 975h30"/>
      <path class="w" d="M1464 988v-24h69v24"/>
      <path class="w2" d="M1484 939h49M1504 957h25M1464 964h69M1384 981h39"/>
      <path class="m" d="M1429 985v-22h23M1424 975h5"/>
      <rect x="1471" y="968" width="6" height="12" fill="#e000e0"/>
      <text class="ty" x="1518" y="937">H</text><text class="ty" x="1518" y="954">II</text><text class="ty" x="1387" y="979">RD</text><text class="ty" x="1476" y="976">H</text><text class="ty" x="1507" y="976">H</text>

      <!-- bottom-left small detail + axes -->
      <text class="tw" x="715" y="954">I D</text><text class="tw" x="715" y="965">I K</text><text class="tw" x="715" y="975">日 口 II</text><text class="tw" x="715" y="985">图 门 昇</text>
      <path d="M690 988a13 6 0 0 1 24 0" fill="none" stroke="#e6e600" stroke-width="2"/><path d="M693 988a10 4 0 0 1 18 0" fill="none" stroke="#e60000" stroke-width="2"/>
      <path d="M690.500 925V900h-3l5-15 5 15h-3v25z" fill="#00e600"/>
      <path d="M699 920h16v-4l15 7-15 5v-4h-16z" fill="#f00000"/>
      <ellipse cx="692.500" cy="923" rx="6.500" ry="6.500" fill="#0a0ab0"/>
      <text x="686" y="882" fill="#00d800" font-size="18">Y</text>
      <text x="732" y="930" fill="#f00000" font-size="18">X</text>
    </svg>

    <!-- view cube strip -->
    <div class="viewbar">
      <svg width="30" height="25" viewBox="0 0 30 25"><defs><radialGradient id="sph" cx=".35" cy=".3" r=".8"><stop offset="0" stop-color="#f4f6f8"/><stop offset="1" stop-color="#7f8a96"/></radialGradient></defs><ellipse cx="14" cy="15" rx="14" ry="5" fill="none" stroke="#555" transform="rotate(-25 14 15)"/><circle cx="14" cy="13" r="11" fill="url(#sph)" stroke="#777"/><circle cx="24" cy="7" r="5" fill="url(#sph)" stroke="#888"/></svg>
      <svg width="30" height="29" viewBox="0 0 30 29"><path d="M1 7 7 1h22v21l-6 6H1z" fill="#aab4c0" stroke="#4d5c6c" stroke-width="1.500"/><path d="M1 7h22v21M23 7l6-6" fill="none" stroke="#4d5c6c" stroke-width="1.500"/><text x="8" y="25" font-size="10" fill="#333" font-family="Liberation Sans">3D</text></svg>
      <svg width="30" height="29" viewBox="0 0 30 29"><path d="M1 7 7 1h22v21l-6 6H1z" fill="#dcecfb" stroke="#4d5c6c" stroke-width="1.500"/><path d="M1 7h22v21M23 7l6-6M7 1v21h22M1 28l6-6" fill="none" stroke="#4d5c6c"/></svg>
      <span class="tri"></span>
      <svg width="30" height="29" viewBox="0 0 30 29"><path d="M1 7 7 1h22v21l-6 6H1z" fill="#8594a6" stroke="#4d5c6c" stroke-width="1.500"/><path d="M1 7h22v21M23 7l6-6" fill="none" stroke="#4d5c6c" stroke-width="1.500"/></svg>
      <span class="tri"></span>
      <svg width="28" height="26" viewBox="0 0 28 26"><path d="M24 9A12 12 0 1 0 25 17" fill="none" stroke="#4d5c6c" stroke-width="2"/><path d="M27 2v9h-9z" fill="#4d5c6c"/></svg>
      <span class="tri"></span>
      <hr>
      <svg width="30" height="28" viewBox="0 0 30 28"><path d="M1 4 5 1h20l4 3v23H1z" fill="#aab4c0" stroke="#4d5c6c" stroke-width="1.300"/><path d="M1 6h28M15 7v18M5 11h3v3H5zM5 16h3v3H5zM5 21h3v3H5zM19 11h3v3h-3zM19 16h3v3h-3zM19 21h3v3h-3zM10 12.500h2M10 17.500h2M24 12.500h2M24 17.500h2M5 3l1 1.500 2-2.500M19 3l1 1.500 2-2.500" fill="none" stroke="#4d5c6c"/></svg>
    </div>

    <!-- network speed widget -->
    <div class="speedbox">
      <div class="speedpill">
        <div class="speedrow sr1"><svg width="9" height="10" viewBox="0 0 9 10"><path d="M4.500 0 9 5H6v5H3V5H0z" fill="#2f9fe0"/></svg><span><b>0</b>K/s</span></div>
        <div class="speedrow sr2"><svg width="9" height="10" viewBox="0 0 9 10"><path d="M4.500 10 9 5H6V0H3v5H0z" fill="#22b04a"/></svg><span><b>1.3</b>K/s</span></div>
      </div>
      <svg class="speedring" width="72" height="72" viewBox="0 0 72 72">
        <defs><linearGradient id="ring" x1="1" y1="0" x2="0" y2="1"><stop offset="0" stop-color="#2fbfa8"/><stop offset=".55" stop-color="#d8d84a"/><stop offset="1" stop-color="#e0703a"/></linearGradient></defs>
        <circle cx="36" cy="36" r="36" fill="#2b3038" fill-opacity=".96"/>
        <circle cx="36" cy="36" r="32" fill="none" stroke="#444a53" stroke-width="2"/>
        <path d="M36 4A32 32 0 1 1 9 19" fill="none" stroke="url(#ring)" stroke-width="2.500"/>
      </svg>
      <div class="speednum">84<small>%</small></div>
    </div>
  </div>
</main>

<footer class="statusbar d-flex">
  <span class="stxt s1">X = 2878878976 Y = 680984</span>
  <span class="stxt s2">层高： 3</span>
  <span class="stxt s3">标高： -0.05~2.95</span>
  <span class="stxt s4">0</span>
  <span class="stxt s5">隐藏： 0</span>
  <button class="btn stbtn sb1"><svg width="18" height="18" viewBox="0 0 18 18"><path d="M3 1v15h14M3 10h6v6" stroke="#444" fill="none"/></svg></button>
  <button class="btn stbtn cur sb2"><svg width="18" height="18" viewBox="0 0 18 18"><rect x="2" y="4" width="15" height="13" fill="#fff" stroke="#5f9ee0"/><rect x="0" y="0" width="6" height="6" fill="#f5a35c"/></svg><span class="tri"></span></button>
  <button class="btn stbtn sb3"><svg width="18" height="18" viewBox="0 0 18 18"><path d="M1 1l16 16M17 1 1 17" stroke="#aaa"/><rect x="7" y="7" width="4" height="4" fill="#888"/></svg></button>
  <button class="btn stbtn sb4"><svg width="20" height="18" viewBox="0 0 20 18"><path d="M15 1 1 16h18" stroke="#444" fill="none"/><rect x="6" y="7" width="4" height="4" fill="#333"/></svg><span class="tri"></span></button>
  <button class="btn stbtn sb5"><svg width="22" height="18" viewBox="0 0 22 18"><path d="M4 2v8M0 6h8" stroke="#444"/><rect x="9" y="11" width="12" height="5" fill="#333"/></svg><span class="tri"></span></button>
  <button class="btn stbtn sb6">跨图层选择</button>
  <button class="btn stbtn sb7">折线选择</button>
  <span class="stxt">按鼠标左键指定第一个角点，或拾取构件图元</span>
  <span class="stxt fps">200 FPS</span>
</footer>

<script src="https://cdn.jsdelivr.net/npm/bootstrap@5.3.0/dist/js/bootstrap.bundle.min.js"></script>
</body>
</html>
